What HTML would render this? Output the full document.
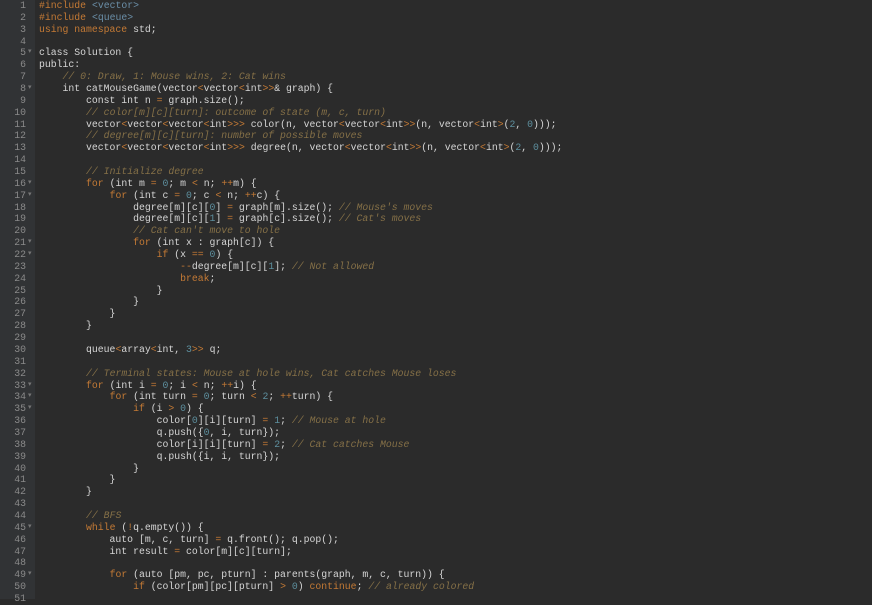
<!DOCTYPE html>
<html><head><meta charset="utf-8"><style>
html,body{margin:0;padding:0;width:872px;height:599px;overflow:hidden;background:#2b2b2b}
#g{position:absolute;left:0;top:0;width:35px;height:599px;background:#313335}
pre{margin:0;font-family:"Liberation Mono",monospace;font-size:9.8px;line-height:11.86px}
#nums{position:absolute;left:0;top:0;width:26px;text-align:right;color:#8a8a8a}
#fold{position:absolute;left:28px;top:0;color:#777;font-size:7px}
#code{position:absolute;left:39px;top:0;color:#d6d6d6}
.k{color:#c47a35}.c{color:#857047;font-style:italic}.n{color:#5d8f9e}.o{color:#c47a35}.s{color:#6b8fa8}
</style></head><body>
<div id="g"></div>
<pre id="nums">1
2
3
4
5
6
7
8
9
10
11
12
13
14
15
16
17
18
19
20
21
22
23
24
25
26
27
28
29
30
31
32
33
34
35
36
37
38
39
40
41
42
43
44
45
46
47
48
49
50
51</pre>
<pre id="fold" style="line-height:11.86px;font-size:7px"> 
 
 
 
▾
 
 
▾
 
 
 
 
 
 
 
▾
▾
 
 
 
▾
▾
 
 
 
 
 
 
 
 
 
 
▾
▾
▾
 
 
 
 
 
 
 
 
 
▾
 
 
 
▾
 
 </pre>
<pre id="code"><span class="k">#include</span> <span class="s">&lt;vector&gt;</span>
<span class="k">#include</span> <span class="s">&lt;queue&gt;</span>
<span class="k">using namespace</span> std;

class Solution {
public:
    <span class="c">// 0: Draw, 1: Mouse wins, 2: Cat wins</span>
    int catMouseGame(vector<span class="o">&lt;</span>vector<span class="o">&lt;</span>int<span class="o">&gt;&gt;</span>&amp; graph) {
        const int n <span class="o">=</span> graph.size();
        <span class="c">// color[m][c][turn]: outcome of state (m, c, turn)</span>
        vector<span class="o">&lt;</span>vector<span class="o">&lt;</span>vector<span class="o">&lt;</span>int<span class="o">&gt;&gt;&gt;</span> color(n, vector<span class="o">&lt;</span>vector<span class="o">&lt;</span>int<span class="o">&gt;&gt;</span>(n, vector<span class="o">&lt;</span>int<span class="o">&gt;</span>(<span class="n">2</span>, <span class="n">0</span>)));
        <span class="c">// degree[m][c][turn]: number of possible moves</span>
        vector<span class="o">&lt;</span>vector<span class="o">&lt;</span>vector<span class="o">&lt;</span>int<span class="o">&gt;&gt;&gt;</span> degree(n, vector<span class="o">&lt;</span>vector<span class="o">&lt;</span>int<span class="o">&gt;&gt;</span>(n, vector<span class="o">&lt;</span>int<span class="o">&gt;</span>(<span class="n">2</span>, <span class="n">0</span>)));

        <span class="c">// Initialize degree</span>
        <span class="k">for</span> (int m <span class="o">=</span> <span class="n">0</span>; m <span class="o">&lt;</span> n; <span class="o">++</span>m) {
            <span class="k">for</span> (int c <span class="o">=</span> <span class="n">0</span>; c <span class="o">&lt;</span> n; <span class="o">++</span>c) {
                degree[m][c][<span class="n">0</span>] <span class="o">=</span> graph[m].size(); <span class="c">// Mouse's moves</span>
                degree[m][c][<span class="n">1</span>] <span class="o">=</span> graph[c].size(); <span class="c">// Cat's moves</span>
                <span class="c">// Cat can't move to hole</span>
                <span class="k">for</span> (int x : graph[c]) {
                    <span class="k">if</span> (x <span class="o">==</span> <span class="n">0</span>) {
                        <span class="o">--</span>degree[m][c][<span class="n">1</span>]; <span class="c">// Not allowed</span>
                        <span class="k">break</span>;
                    }
                }
            }
        }

        queue<span class="o">&lt;</span>array<span class="o">&lt;</span>int, <span class="n">3</span><span class="o">&gt;&gt;</span> q;

        <span class="c">// Terminal states: Mouse at hole wins, Cat catches Mouse loses</span>
        <span class="k">for</span> (int i <span class="o">=</span> <span class="n">0</span>; i <span class="o">&lt;</span> n; <span class="o">++</span>i) {
            <span class="k">for</span> (int turn <span class="o">=</span> <span class="n">0</span>; turn <span class="o">&lt;</span> <span class="n">2</span>; <span class="o">++</span>turn) {
                <span class="k">if</span> (i <span class="o">&gt;</span> <span class="n">0</span>) {
                    color[<span class="n">0</span>][i][turn] <span class="o">=</span> <span class="n">1</span>; <span class="c">// Mouse at hole</span>
                    q.push({<span class="n">0</span>, i, turn});
                    color[i][i][turn] <span class="o">=</span> <span class="n">2</span>; <span class="c">// Cat catches Mouse</span>
                    q.push({i, i, turn});
                }
            }
        }

        <span class="c">// BFS</span>
        <span class="k">while</span> (<span class="o">!</span>q.empty()) {
            auto [m, c, turn] <span class="o">=</span> q.front(); q.pop();
            int result <span class="o">=</span> color[m][c][turn];

            <span class="k">for</span> (auto [pm, pc, pturn] : parents(graph, m, c, turn)) {
                <span class="k">if</span> (color[pm][pc][pturn] <span class="o">&gt;</span> <span class="n">0</span>) <span class="k">continue</span>; <span class="c">// already colored</span>
</pre>
</body></html>
